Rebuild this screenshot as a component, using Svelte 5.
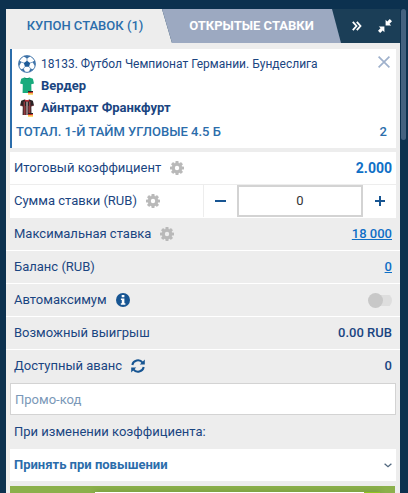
<script lang="ts">
  let stake = $state("0");
  let promo = $state("");
  let auto_max = $state(false);
  let policy = $state("up");

  const teams = [
    { name: "Вердер", color: "#19ab7d", striped: false },
    { name: "Айнтрахт Франкфурт", color: "#2b2326", striped: true },
  ];

  function step(by: number) {
    stake = String(Math.max(0, (Number(stake) || 0) + by));
  }
</script>

{#snippet gear()}
  <svg class="icon" width="14" height="14" viewBox="0 0 14 14" aria-hidden="true">
    <g fill="#b9b9b9">
      {#each [0, 45, 90, 135] as angle (angle)}
        <rect x="5.4" y="0" width="3.2" height="14" rx="0.7" transform="rotate({angle} 7 7)" />
      {/each}
      <circle cx="7" cy="7" r="5.2" />
    </g>
    <circle class="hole" cx="7" cy="7" r="2.2" />
  </svg>
{/snippet}

<div class="page">
  <div class="coupon">
    <nav class="tabs">
      <button class="tab active">КУПОН СТАВОК (1)</button>
      <button class="tab other">ОТКРЫТЫЕ СТАВКИ</button>
      <div class="tools">
        <button aria-label="Скрыть">
          <svg width="10" height="10" viewBox="0 0 10 10" fill="none" stroke="#fff" stroke-width="1.8">
            <path d="M.8.8 4.5 5 .8 9.2M4.8.8 8.5 5 4.8 9.2" />
          </svg>
        </button>
        <button aria-label="Свернуть">
          <svg width="14" height="14" viewBox="0 0 14 14" fill="#fff">
            <path d="M7.6.8v5.6h5.6L11.5 4.7 14 2.2 11.8 0 9.3 2.5z" />
            <path d="M6.4 13.2V7.6H.8l1.7 1.7L0 11.8 2.2 14l2.5-2.5z" />
          </svg>
        </button>
      </div>
    </nav>

    <section class="bet">
      <div class="line event">
        <svg width="18" height="18" viewBox="0 0 18 18" fill="none" stroke="#2f68a3">
          <circle cx="9" cy="9" r="8.4" fill="#fff" stroke-width="0.9" />
          <path d="M9 5.8 12.2 8 11 11.7H7L5.8 8z" fill="#1f5c99" stroke="none" />
          <path d="M9 6V3M12 8l3-1M11 11.5l1.8 2.6M7 11.5l-1.8 2.6M6 8 3 7" stroke-width="0.6" />
          <path
            d="M6 1.3 9 3.2l3-1.9zM16.6 5.8 14.9 7l1.9 3.4zM14.9 14.6l-2.3-.7-1.4 2.8zM3.1 14.6l2.3-.7 1.4 2.8zM1.4 5.8 3.1 7l-1.9 3.4z"
            fill="#1f5c99"
            stroke-width="0.5"
          />
        </svg>
        <span>18133. Футбол Чемпионат Германии. Бундеслига</span>
        <button class="close" aria-label="Удалить">
          <svg width="12" height="12" viewBox="0 0 12 12" fill="none" stroke="#9fb1cc" stroke-width="1.7">
            <path d="m.6.6 10.8 10.8M11.4.6.6 11.4" />
          </svg>
        </button>
      </div>
      {#each teams as team (team.name)}
        <div class="line team">
          <svg width="18" height="18" viewBox="0 0 18 18">
            <path
              d="M6.5 .6Q9 1.8 11.5 .6l3.4 1.2 1.1 4.6-2.7.9.2 8.7H4.6l.2-8.7-2.7-.9 1.1-4.6z"
              fill={team.color}
            />
            {#if team.striped}
              <path d="M6.2 2.5V16M11.8 2.5V16" stroke="#d14a50" stroke-width="0.9" />
              <path d="M9 2.5V16" stroke="#e8dcdc" stroke-width="1" />
              <path d="M2.4 6.3l2.4.8M15.6 6.3l-2.4.8M7.6 7V16M10.4 7V16" stroke="#8f3339" stroke-width="0.7" />
              <path d="M6.5 .6Q9 1.8 11.5 .6L10.7 2.4H7.3z" fill="#c52d39" />
            {:else}
              <path d="M6.5 .6Q9 1.8 11.5 .6L10.7 2H7.3z" fill="#0d8f68" />
            {/if}
            <path d="M10 14h5v1.2h-5z" fill="#222" />
            <path d="M10 15.2h5v1.2h-5z" fill="#e32119" />
            <path d="M10 16.4h5v1.2h-5z" fill="#f7c51e" />
          </svg>
          <b>{team.name}</b>
        </div>
      {/each}
      <div class="market">
        <span>ТОТАЛ. 1-Й ТАЙМ УГЛОВЫЕ 4.5 Б</span>
        <span>2</span>
      </div>
    </section>

    <div class="row white">
      <span>Итоговый коэффициент</span>
      {@render gear()}
      <b class="value total">2.000</b>
    </div>
    <div class="row white stake">
      <label for="stake">Сумма ставки (RUB)</label>
      {@render gear()}
      <div class="stepper">
        <button aria-label="Меньше" onclick={() => step(-1)}>
          <svg width="12" height="12" viewBox="0 0 12 12"><path d="M0 5h11v2H0z" fill="#175592" /></svg>
        </button>
        <input id="stake" type="text" bind:value={stake} />
        <button aria-label="Больше" onclick={() => step(1)}>
          <svg width="12" height="12" viewBox="0 0 12 12">
            <path d="M1 5h10v2H1zM5 1h2v10H5z" fill="#175592" />
          </svg>
        </button>
      </div>
    </div>
    <div class="row">
      <span>Максимальная ставка</span>
      {@render gear()}
      <a class="value" href="#max">18 000</a>
    </div>
    <div class="row">
      <span>Баланс (RUB)</span>
      <a class="value" href="#balance">0</a>
    </div>
    <div class="row">
      <label for="auto-max">Автомаксимум</label>
      <svg class="icon" width="14" height="14" viewBox="0 0 14 14">
        <circle cx="7" cy="7" r="7" fill="#175592" />
        <path d="M5.7 2h2.7v2.2H5.7zM4.9 5.4h3.5v4.8h1v1.6H4.8v-1.6h1V7h-.9z" fill="#fff" />
      </svg>
      <input id="auto-max" class="toggle" type="checkbox" bind:checked={auto_max} />
    </div>
    <div class="row">
      <span>Возможный выигрыш</span>
      <span class="value">0.00 RUB</span>
    </div>
    <div class="row last">
      <span>Доступный аванс</span>
      <button class="icon" aria-label="Обновить">
        <svg width="14" height="14" viewBox="0 0 14 14" fill="none" stroke="#175592" stroke-width="2">
          <path d="M1.3 6A5.8 5.8 0 0 1 11.6 3.6M12.7 8A5.8 5.8 0 0 1 2.4 10.4" />
          <path d="M13.8.6v5H8.8zM.2 13.4v-5h5z" fill="#175592" stroke="none" />
        </svg>
      </button>
      <span class="value">0</span>
    </div>

    <input class="promo" type="text" placeholder="Промо-код" aria-label="Промо-код" bind:value={promo} />
    <label class="policy-label" for="policy">При изменении коэффициента:</label>
    <div class="select">
      <select id="policy" bind:value={policy}>
        <option value="up">Принять при повышении</option>
        <option value="any">Принять любое изменение</option>
        <option value="none">Не принимать</option>
      </select>
      <svg width="8" height="5" viewBox="0 0 8 5" fill="none" stroke="#52687f" stroke-width="1.3">
        <path d="m.6.7 3.4 3 3.4-3" />
      </svg>
    </div>
    <button class="submit" aria-label="Сделать ставку"></button>
  </div>
  <div class="scrollbar"></div>
  <div class="popup"></div>
</div>

<style>
  :global(body) {
    background: #0c314f;
  }

  .page {
    display: flex;
    box-sizing: border-box;
    height: 100vh;
    padding: 9px 2px 0 6px;
    overflow: hidden;
    font: 13px/20px Roboto, sans-serif;
    color: #1a4581;
  }

  button,
  input,
  select {
    box-sizing: border-box;
    margin: 0;
    padding: 0;
    border: none;
    border-radius: 0;
    background: none;
    font: inherit;
    color: inherit;
  }

  button {
    cursor: pointer;
  }

  svg {
    display: block;
    flex: none;
  }

  .coupon {
    flex: 1;
    min-width: 0;
    background: #ededed;
  }

  .scrollbar {
    width: 5px;
    height: 131px;
    margin-left: 1px;
    border-radius: 3px;
    background: #446280;
  }

  /* tabs */
  .tabs {
    display: flex;
    height: 34px;
    margin-bottom: 6px;
    background: #1b3e57;
  }

  .tab {
    height: 34px;
    font-weight: 500;
    white-space: nowrap;
  }

  .tab.active {
    flex: 158 1 0;
    margin-right: -10px;
    padding-right: 8px;
    background: #ededed;
    color: #2b6dab;
    clip-path: polygon(0 0, calc(100% - 10px) 0, 100% 100%, 0 100%);
  }

  .tab.other {
    flex: 179 1 0;
    background: #9ca9c1;
    color: #fff;
    font-weight: 700;
    clip-path: polygon(0 0, calc(100% - 9px) 0, 100% 100%, 10px 100%);
  }

  .tools {
    display: flex;
    align-items: center;
    gap: 16px;
    padding: 0 8px 0 11px;
  }

  /* bet card */
  .bet {
    box-sizing: border-box;
    height: 99px;
    margin: 0 4px 4px;
    padding: 4px 5px 0 6px;
    border-left: 2px solid #2b6dab;
    background: #fff;
  }

  .line {
    display: flex;
    align-items: center;
    gap: 5px;
    height: 22px;
  }

  .event {
    font-size: 12px;
  }

  .team b {
    font-weight: 700;
  }

  .close {
    margin: -5px 0 0 auto;
    padding-right: 1px;
  }

  .market {
    display: flex;
    justify-content: space-between;
    margin-left: -2px;
    padding: 2px 4px 0 0;
    color: #2b6dab;
    font-weight: 500;
    line-height: 22px;
  }

  /* rows */
  .row {
    display: flex;
    align-items: center;
    box-sizing: border-box;
    height: 33px;
    padding: 0 8px;
    border-bottom: 1px solid #fff;
  }

  .row.white {
    margin: 0 4px;
    padding: 0 4px;
    border-color: #ededed;
    background: #fff;
  }

  .row.stake {
    padding-right: 0;
    border-color: #fff;
  }

  .row.last {
    border-color: #ededed;
  }

  .icon {
    margin-left: 9px;
  }

  .hole {
    fill: #ededed;
  }

  .white .hole {
    fill: #fff;
  }

  .value {
    margin-left: auto;
    font-weight: 500;
  }

  .value.total {
    font-size: 14px;
    font-weight: 700;
    color: #0f6fc6;
  }

  a {
    color: #0f6fc6;
    text-underline-offset: 1px;
  }

  .stepper {
    display: flex;
    width: 193px;
    height: 32px;
    margin-left: auto;
    box-sizing: border-box;
    border-left: 1px solid #ededed;
  }

  .stepper button {
    display: grid;
    place-items: center;
    width: 33px;
  }

  .stepper input {
    flex: 1;
    min-width: 0;
    border: 2px solid #d3d3d3;
    background: #fff;
    color: #333;
    text-align: center;
  }

  .toggle {
    appearance: none;
    display: flex;
    align-items: center;
    width: 24px;
    height: 15px;
    margin-left: auto;
    background: linear-gradient(#dedede, #dedede) right center / 20px 11px no-repeat;
    border-radius: 8px;
  }

  .toggle::before {
    content: "";
    width: 15px;
    height: 15px;
    border-radius: 50%;
    background: #c8c8c8;
  }

  .toggle:checked::before {
    margin-left: auto;
    background: #175592;
  }

  /* promo and odds policy */
  .promo {
    display: block;
    width: calc(100% - 8px);
    height: 32px;
    margin: 0 4px;
    padding: 0 4px;
    border: 1px solid #d3d3d3;
    background: #fff;
  }

  .promo::placeholder {
    color: #7a98b8;
    opacity: 1;
  }

  .policy-label {
    display: block;
    padding: 0 8px;
    line-height: 34px;
  }

  .select {
    display: flex;
    align-items: center;
    margin: 0 4px 5px;
    padding-right: 4px;
    background: #fff;
  }

  .select select {
    appearance: none;
    flex: 1;
    height: 32px;
    padding: 0 4px;
    color: #2b6dab;
    font-weight: 700;
  }

  .submit {
    display: block;
    width: calc(100% - 9px);
    height: 40px;
    margin-left: 4px;
    background: #8bb04b;
  }

  /* edge of the notice that slides in from below */
  .popup {
    position: fixed;
    right: 28px;
    bottom: 0;
    left: 95px;
    height: 1px;
    background: linear-gradient(to left, #8fc321 16px, #fff 16px);
    box-shadow: 0 0 5px rgba(40, 70, 0, 0.7);
  }
</style>
